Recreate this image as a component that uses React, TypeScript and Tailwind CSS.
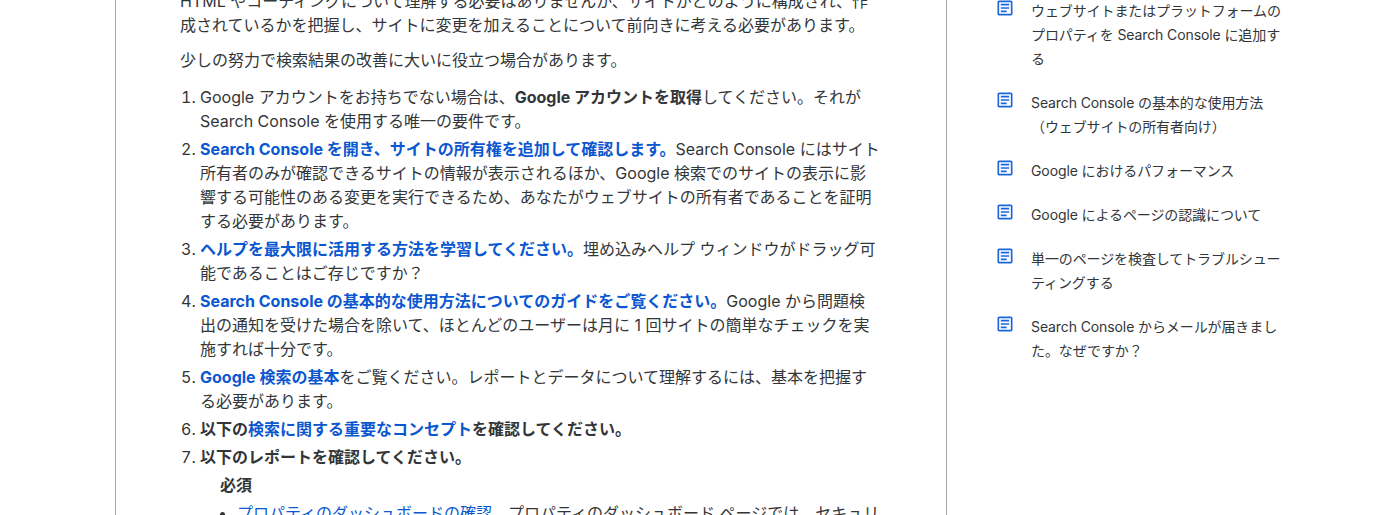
const related = [
  ['ウェブサイトまたはプラットフォームの', 'プロパティを Search Console に追加す', 'る'],
  ['Search Console の基本的な使用方法', '（ウェブサイトの所有者向け）'],
  ['Google におけるパフォーマンス'],
  ['Google によるページの認識について'],
  ['単一のページを検査してトラブルシュー', 'ティングする'],
  ['Search Console からメールが届きまし', 'た。なぜですか？'],
];

function ArticleIcon() {
  return (
    <svg viewBox="0 0 24 24" className="w-5 h-5 -mt-px shrink-0 fill-[#1a66e0]">
      <path d="M19 5v14H5V5h14m0-2H5c-1.1 0-2 .9-2 2v14c0 1.1.9 2 2 2h14c1.1 0 2-.9 2-2V5c0-1.1-.9-2-2-2z" />
      <path d="M14 17H7v-2h7v2zm3-4H7v-2h10v2zm0-4H7V7h10v2z" />
    </svg>
  );
}

function A({ children }: { children: React.ReactNode }) {
  return <a className="text-[#0b57d0]">{children}</a>;
}

export default function App() {
  return (
    <div className="h-[515px] overflow-hidden bg-white flex pl-[115px] text-[#333639] font-['Inter','Noto_Sans_CJK_JP',sans-serif]">
      {/* Article */}
      <div className="w-[832px] shrink-0 border-x border-[#a8a8a8] pl-16">
        <div className="-mt-[11px] text-base leading-6 whitespace-nowrap">
          <p className="mb-[11px]">
            HTML やコーディングについて理解する必要はありませんが、サイトがどのように構成され、作<br />
            成されているかを把握し、サイトに変更を加えることについて前向きに考える必要があります。
          </p>
          <p className="mb-[13px]">少しの努力で検索結果の改善に大いに役立つ場合があります。</p>
          <ol className="list-decimal pl-5 flex flex-col gap-1">
            <li>
              Google アカウントをお持ちでない場合は、<b>Google アカウントを取得</b>してください。それが<br />
              Search Console を使用する唯一の要件です。
            </li>
            <li>
              <b><A>Search Console を開き、サイトの所有権を追加して確認します。</A></b>
              Search Console にはサイト<br />
              所有者のみが確認できるサイトの情報が表示されるほか、Google 検索でのサイトの表示に影<br />
              響する可能性のある変更を実行できるため、あなたがウェブサイトの所有者であることを証明<br />
              する必要があります。
            </li>
            <li>
              <b><A>ヘルプを最大限に活用する方法を学習してください。</A></b>
              埋め込みヘルプ ウィンドウがドラッグ可<br />
              能であることはご存じですか？
            </li>
            <li>
              <b><A>Search Console の基本的な使用方法についてのガイドをご覧ください。</A></b>
              Google から問題検<br />
              出の通知を受けた場合を除いて、ほとんどのユーザーは月に 1 回サイトの簡単なチェックを実<br />
              施すれば十分です。
            </li>
            <li>
              <b><A>Google 検索の基本</A></b>
              をご覧ください。レポートとデータについて理解するには、基本を把握す<br />
              る必要があります。
            </li>
            <li>
              <b>以下の<A>検索に関する重要なコンセプト</A>を確認してください。</b>
            </li>
            <li>
              <b>以下のレポートを確認してください。</b>
              <div className="ml-5 mt-1 font-bold">必須</div>
              <ul className="list-disc pl-[37px] mt-1">
                <li>
                  <A>プロパティのダッシュボードの確認</A>。プロパティのダッシュボード ページでは、セキュリ
                </li>
              </ul>
            </li>
          </ol>
        </div>
      </div>

      {/* Related links */}
      <div className="ml-12 -mt-px flex flex-col gap-5 text-sm leading-6 tracking-[-0.1px] whitespace-nowrap">
        {related.map((lines) => (
          <div key={lines[0]} className="flex gap-4">
            <ArticleIcon />
            <span>
              {lines.map((line) => (
                <span key={line} className="block">{line}</span>
              ))}
            </span>
          </div>
        ))}
      </div>
    </div>
  );
}
